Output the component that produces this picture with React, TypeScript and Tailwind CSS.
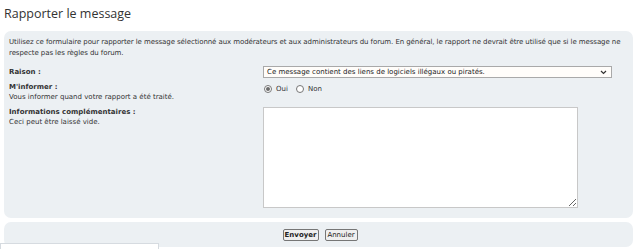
import React, { useState } from 'react';

const App: React.FC = () => {
  const [notify, setNotify] = useState(true);

  return (
    <div className="relative w-[640px] h-[249px] overflow-hidden bg-white text-[#333] font-['DejaVu_Sans',Verdana,sans-serif]">
      {/* Title */}
      <h2 className="h-[31px] pl-[4px] pt-[3px] text-[12.5px] leading-[22px] text-[#333] font-['Open_Sans',sans-serif]">
        Rapporter le message
      </h2>

      {/* Form panel */}
      <div className="ml-[4px] w-[629px] h-[187px] rounded-[7px] bg-[#ECF0F3] px-[5px] pt-[6px]">
        <p className="whitespace-nowrap text-[7px] leading-[11px] tracking-[-0.08px] text-[#333]">
          Utilisez ce formulaire pour rapporter le message sélectionné aux modérateurs et aux administrateurs du forum. En
          général, le rapport ne devrait être utilisé que si le message ne
          <br />
          respecte pas les règles du forum.
        </p>

        {/* Raison */}
        <div className="mt-[7px] grid grid-cols-[254px_1fr]">
          <div className="text-[7px] leading-[12px] font-bold">Raison :</div>
          <div className="flex h-[12px] w-[349px] items-center justify-between border border-[#a9a9a9] bg-[#fffdfa] pl-[3px] pr-[4px] text-[7px] text-[#222]">
            <span>Ce message contient des liens de logiciels illégaux ou piratés.</span>
            <svg width="7" height="5" viewBox="0 0 7 5" className="text-[#333]">
              <path d="M1 1 L3.5 3.5 L6 1" fill="none" stroke="currentColor" strokeWidth="1.2" />
            </svg>
          </div>
        </div>

        {/* M'informer */}
        <div className="mt-[4px] grid grid-cols-[254px_1fr]">
          <div className="text-[7px] leading-[10px]">
            <div className="font-bold">M'informer :</div>
            <div>Vous informer quand votre rapport a été traité.</div>
          </div>
          <div className="flex items-center gap-[4px] pt-[2px] text-[7px] leading-[10px] self-start">
            <button onClick={() => setNotify(true)} className="flex items-center gap-[4px] pl-[1px]">
              <span className="flex h-[8px] w-[8px] items-center justify-center rounded-full border border-[#767676] bg-white">
                {notify && <span className="h-[4px] w-[4px] rounded-full bg-[#6b6b6b]" />}
              </span>
              <span>Oui</span>
            </button>
            <button onClick={() => setNotify(false)} className="ml-[4px] flex items-center gap-[4px]">
              <span className="flex h-[8px] w-[8px] items-center justify-center rounded-full border border-[#767676] bg-white">
                {!notify && <span className="h-[4px] w-[4px] rounded-full bg-[#6b6b6b]" />}
              </span>
              <span>Non</span>
            </button>
          </div>
        </div>

        {/* Informations complémentaires */}
        <div className="mt-[5px] grid grid-cols-[254px_1fr]">
          <div className="text-[7px] leading-[10px]">
            <div className="font-bold">Informations complémentaires :</div>
            <div>Ceci peut être laissé vide.</div>
          </div>
          <textarea
            readOnly
            className="block h-[101px] w-[315px] border border-[#c8c8c8] bg-white outline-none"
          />
        </div>
      </div>

      {/* Submit panel */}
      <div className="ml-[4px] mt-[4px] flex h-[25px] w-[629px] items-center justify-center gap-[6px] rounded-[7px] bg-[#ECF0F3] pl-[3px]">
        <button className="h-[12px] w-[36px] rounded-[2px] border border-[#767676] bg-[#efefef] text-[7px] leading-[10px] font-bold text-[#222]">
          Envoyer
        </button>
        <button className="h-[12px] w-[33px] rounded-[2px] border border-[#767676] bg-[#efefef] text-[7px] leading-[10px] text-[#222]">
          Annuler
        </button>
      </div>

      {/* Box peeking in at the bottom */}
      <div className="absolute left-0 top-[243px] h-[10px] w-[159px] border border-[#d6dbe0] bg-white" />
    </div>
  );
};

export default App;
